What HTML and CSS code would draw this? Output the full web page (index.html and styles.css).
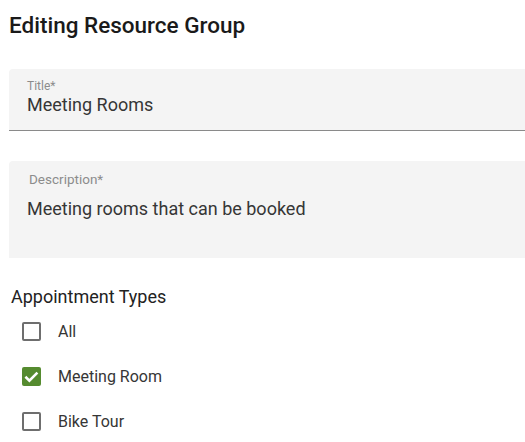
FILE: index.html
```html
<!DOCTYPE html>
<html>
<head>
<meta charset="utf-8">
<link rel="stylesheet" href="styles.css">
</head>
<body>
<div class="page">
  <h1 class="heading">Editing Resource Group</h1>
  <div class="field field-title">
    <div class="label">Title*</div>
    <div class="value">Meeting Rooms</div>
  </div>
  <div class="field field-desc">
    <div class="label label-desc">Description*</div>
    <div class="value">Meeting rooms that can be booked</div>
  </div>
  <div class="group">
    <div class="group-label">Appointment Types</div>
    <div class="option">
      <span class="box"></span>
      <span class="opt-text">All</span>
    </div>
    <div class="option">
      <span class="box checked">
        <svg viewBox="0 0 19 19" width="19" height="19"><path d="M3.4 9.8 L7.4 13.6 L15.4 5.6" fill="none" stroke="#fff" stroke-width="2.6"/></svg>
      </span>
      <span class="opt-text">Meeting Room</span>
    </div>
    <div class="option">
      <span class="box"></span>
      <span class="opt-text">Bike Tour</span>
    </div>
  </div>
</div>
</body>
</html>
```

FILE: styles.css
```css
html, body {
  margin: 0;
  padding: 0;
  background: #fff;
}
body {
  font-family: Roboto, "Liberation Sans", sans-serif;
  color: #212121;
  width: 525px;
  overflow: hidden;
}
.page {
  padding: 12px 0 0 9px;
}
.heading {
  margin: 0;
  font-size: 22.5px;
  font-weight: 500;
  line-height: 26px;
  color: #1a1a1a;
}
.field {
  background: #f4f4f4;
  border-radius: 4px 4px 0 0;
  margin-right: -10px;
  box-sizing: border-box;
  padding-left: 18px;
}
.field-title {
  margin-top: 31px;
  height: 62px;
  border-bottom: 1px solid #8a8a8a;
  padding-top: 10px;
}
.field-desc {
  margin-top: 30px;
  height: 97px;
  padding-top: 10px;
}
.label {
  font-size: 12px;
  line-height: 14px;
  color: #8c8c8c;
}
.label-desc {
  font-size: 13.5px;
  line-height: 16px;
  padding-left: 2px;
  margin-bottom: 10px;
}
.value {
  font-size: 18px;
  line-height: 24px;
  color: #363636;
}
.group {
  padding-top: 28px;
  padding-left: 2px;
}
.group-label {
  font-size: 18px;
  line-height: 22px;
  color: #222;
  margin-bottom: 12px;
}
.option {
  display: flex;
  align-items: center;
  height: 22px;
  margin-bottom: 23px;
  padding-left: 11px;
}
.box {
  width: 19px;
  height: 19px;
  box-sizing: border-box;
  border: 2px solid #6e6e6e;
  border-radius: 2px;
  margin-right: 17px;
  display: flex;
  align-items: center;
  justify-content: center;
  flex: none;
}
.box.checked {
  background: #558b2f;
  border: none;
}
.box.checked svg {
  display: block;
}
.opt-text {
  font-size: 16px;
  color: #363636;
}
```
